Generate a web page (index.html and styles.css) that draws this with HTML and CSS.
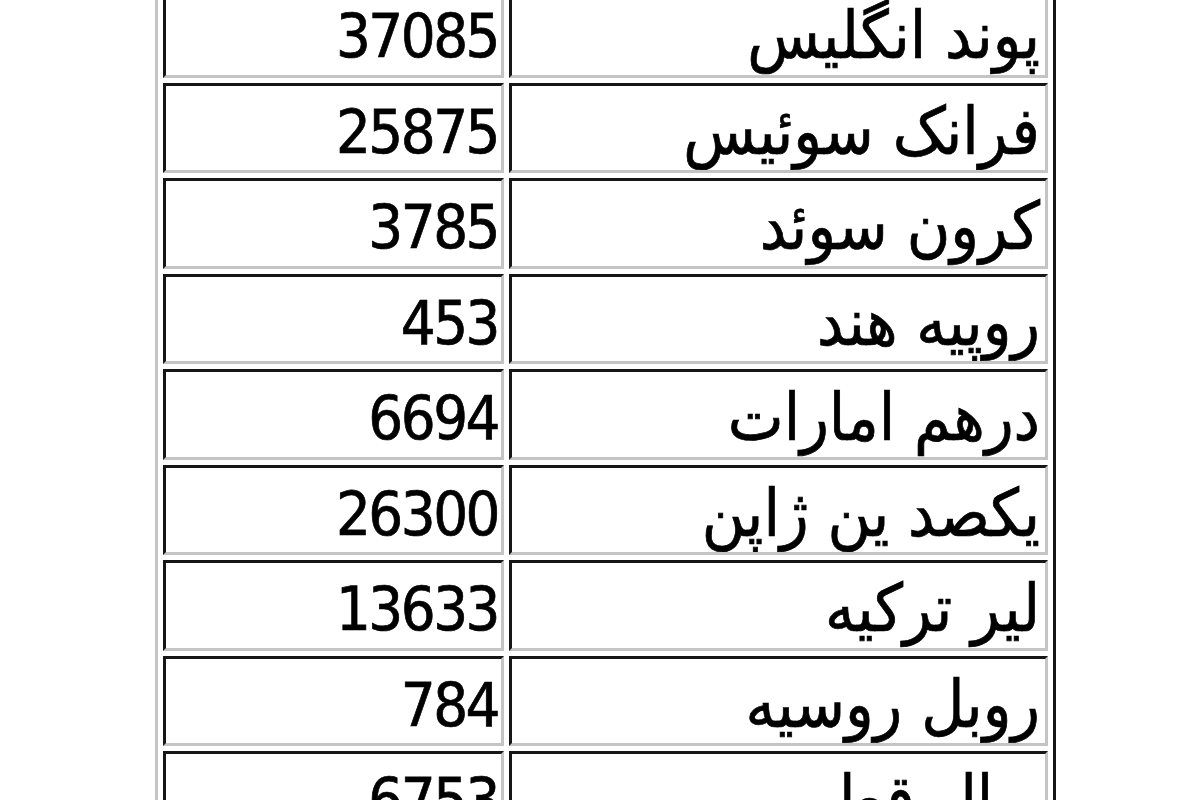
FILE: index.html
```html
<!DOCTYPE html>
<html lang="fa">
<head>
<meta charset="utf-8">
<title>نرخ ارز</title>
<link rel="stylesheet" href="styles.css">
</head>
<body>
<div class="rates" dir="rtl">
  <div class="cell name">دلار آمریکا</div><div class="cell num">29495</div>
  <div class="cell name">پوند انگلیس</div><div class="cell num">37085</div>
  <div class="cell name">فرانک سوئیس</div><div class="cell num">25875</div>
  <div class="cell name">کرون سوئد</div><div class="cell num">3785</div>
  <div class="cell name">روپیه هند</div><div class="cell num">453</div>
  <div class="cell name">درهم امارات</div><div class="cell num">6694</div>
  <div class="cell name">یکصد ین ژاپن</div><div class="cell num">26300</div>
  <div class="cell name">لیر ترکیه</div><div class="cell num">13633</div>
  <div class="cell name">روبل روسیه</div><div class="cell num">784</div>
  <div class="cell name">ریال قطر</div><div class="cell num">6753</div>
</div>
</body>
</html>
```
FILE: styles.css
```css
html, body {
  margin: 0;
  padding: 0;
  background: #ffffff;
  overflow: hidden;
}

.rates {
  margin-top: -116.5px;
  margin-left: 155px;
  width: 901px;
  box-sizing: border-box;
  display: grid;
  grid-template-columns: 539px 341px;
  grid-auto-rows: 90.5px;
  gap: 5px;
  padding: 5px;
  border: 3px solid;
  border-color: #c4c4c4 #161616 #161616 #c4c4c4;
  background: #ffffff;
}

.cell {
  box-sizing: border-box;
  border: 3px solid;
  border-color: #161616 #c4c4c4 #c4c4c4 #161616;
  font-family: "DejaVu Sans Condensed", "DejaVu Sans", sans-serif;
  color: #000000;
  text-align: right;
  white-space: nowrap;
  overflow: hidden;
  -webkit-text-stroke: 0.7px #000000;
}

.name {
  font-size: 66px;
  line-height: 66px;
  padding-top: 13px;
  padding-right: 5px;
}

.num {
  direction: ltr;
  font-size: 61px;
  line-height: 61px;
  padding-top: 15px;
  letter-spacing: -2.5px;
  padding-right: 3px;
}
```
